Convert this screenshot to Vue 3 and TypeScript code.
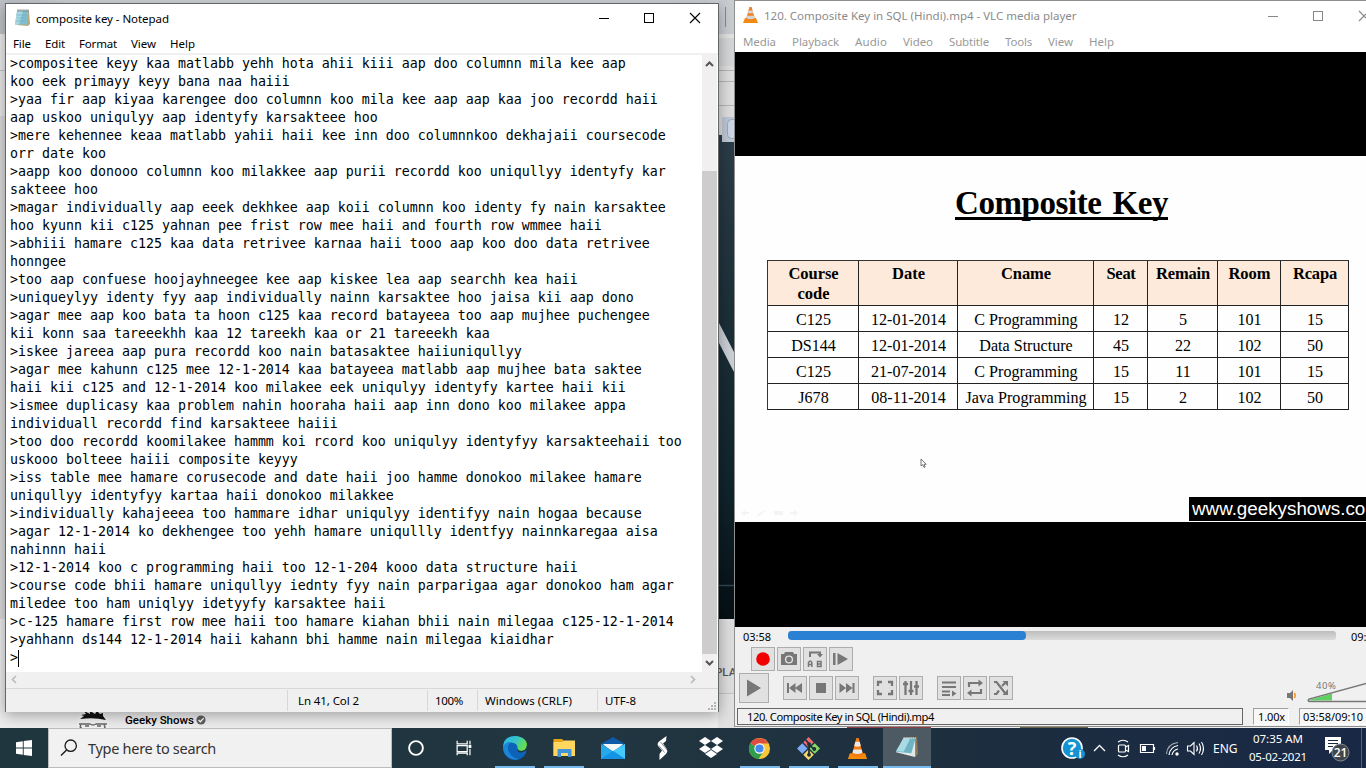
<script setup lang="ts">
import type { Directive } from 'vue'

// Spreads the tracking of a label so that it takes the given width.
const vFit: Directive<HTMLElement, number> = {
  mounted(el, binding) {
    const natural = el.getBoundingClientRect().width
    const count = (el.textContent ?? '').trim().length
    if (count > 0) el.style.letterSpacing = `${(binding.value - natural) / count}px`
  },
}

interface Label { text: string; width: number }

const lines: string[] = [
  '>compositee keyy kaa matlabb yehh hota ahii kiii aap doo columnn mila kee aap',
  'koo eek primayy keyy bana naa haiii',
  '>yaa fir aap kiyaa karengee doo columnn koo mila kee aap aap kaa joo recordd haii',
  'aap uskoo uniqulyy aap identyfy karsakteee hoo',
  '>mere kehennee keaa matlabb yahii haii kee inn doo columnnkoo dekhajaii coursecode',
  'orr date koo',
  '>aapp koo donooo columnn koo milakkee aap purii recordd koo uniqullyy identyfy kar',
  'sakteee hoo',
  '>magar individually aap eeek dekhkee aap koii columnn koo identy fy nain karsaktee',
  'hoo kyunn kii c125 yahnan pee frist row mee haii and fourth row wmmee haii',
  '>abhiii hamare c125 kaa data retrivee karnaa haii tooo aap koo doo data retrivee',
  'honngee',
  '>too aap confuese hoojayhneegee kee aap kiskee lea aap searchh kea haii',
  '>uniqueylyy identy fyy aap individually nainn karsaktee hoo jaisa kii aap dono',
  '>agar mee aap koo bata ta hoon c125 kaa record batayeea too aap mujhee puchengee',
  'kii konn saa tareeekhh kaa 12 tareekh kaa or 21 tareeekh kaa',
  '>iskee jareea aap pura recordd koo nain batasaktee haiiuniqullyy',
  '>agar mee kahunn c125 mee 12-1-2014 kaa batayeea matlabb aap mujhee bata saktee',
  'haii kii c125 and 12-1-2014 koo milakee eek uniqulyy identyfy kartee haii kii',
  '>ismee duplicasy kaa problem nahin hooraha haii aap inn dono koo milakee appa',
  'individuall recordd find karsakteee haiii',
  '>too doo recordd koomilakee hammm koi rcord koo uniqulyy identyfyy karsakteehaii too',
  'uskooo bolteee haiii composite keyyy',
  '>iss table mee hamare corusecode and date haii joo hamme donokoo milakee hamare',
  'uniqullyy identyfyy kartaa haii donokoo milakkee',
  '>individually kahajeeea too hammare idhar uniqulyy identifyy nain hogaa because',
  '>agar 12-1-2014 ko dekhengee too yehh hamare uniqullly identfyy nainnkaregaa aisa',
  'nahinnn haii',
  '>12-1-2014 koo c programming haii too 12-1-204 kooo data structure haii',
  '>course code bhii hamare uniqullyy iednty fyy nain parparigaa agar donokoo ham agar',
  'miledee too ham uniqlyy idetyyfy karsaktee haii',
  '>c-125 hamare first row mee haii too hamare kiahan bhii nain milegaa c125-12-1-2014',
  '>yahhann ds144 12-1-2014 haii kahann bhi hamme nain milegaa kiaidhar',
  '>',
]

const noteMenu: Label[] = [
  { text: 'File', width: 18 },
  { text: 'Edit', width: 20 },
  { text: 'Format', width: 38 },
  { text: 'View', width: 25 },
  { text: 'Help', width: 25 },
]

const vlcMenu: Label[] = [
  { text: 'Media', width: 33 },
  { text: 'Playback', width: 47 },
  { text: 'Audio', width: 32 },
  { text: 'Video', width: 30 },
  { text: 'Subtitle', width: 40 },
  { text: 'Tools', width: 27 },
  { text: 'View', width: 25 },
  { text: 'Help', width: 25 },
]

const heads: Label[][] = [
  [{ text: 'Course', width: 50 }, { text: 'code', width: 32 }],
  [{ text: 'Date', width: 33 }],
  [{ text: 'Cname', width: 50 }],
  [{ text: 'Seat', width: 29 }],
  [{ text: 'Remain', width: 54 }],
  [{ text: 'Room', width: 42 }],
  [{ text: 'Rcapa', width: 44 }],
]

const rows: string[][] = [
  ['C125', '12-01-2014', 'C Programming', '12', '5', '101', '15'],
  ['DS144', '12-01-2014', 'Data Structure', '45', '22', '102', '50'],
  ['C125', '21-07-2014', 'C Programming', '15', '11', '101', '15'],
  ['J678', '08-11-2014', 'Java Programming', '15', '2', '102', '50'],
]
</script>

<template>
  <div class="desktop">
    <div class="browser">
      <div class="tabs"></div>
      <div class="address"></div>
      <div class="bookmarks"></div>
      <div class="hero"></div>
      <div class="below"></div>
    </div>
    <div class="gap-view">
      <svg width="17" height="728" viewBox="0 0 17 728">
        <defs>
          <linearGradient id="heroShade" x1="0" y1="0" x2="0" y2="1">
            <stop offset="0" stop-color="#2b3d49" /><stop offset=".35" stop-color="#1d3039" />
            <stop offset=".75" stop-color="#10232b" /><stop offset="1" stop-color="#050f14" />
          </linearGradient>
        </defs>
        <rect width="17" height="34" fill="#c9cdd2" /><rect y="34" width="17" height="4" fill="#e2e2e2" />
        <rect y="38" width="17" height="28" fill="#d5d6d7" /><rect y="66" width="17" height="70" fill="#dedede" />
        <path d="M0 70.500H17M0 81.500H17M0 105.500H17" stroke="#b5b6b8" />
        <path d="M7.500 7V27" stroke="#858b92" />
        <rect y="135" width="17" height="484" fill="url(#heroShade)" />
        <rect x="4" y="117" width="13" height="25" fill="#c0c8d5" />
        <rect x="9.500" y="119.500" width="12" height="19" rx="4" fill="#cdd7e9" stroke="#9ba8c0" />
        <path d="M0 321L17 354V374L0 341Z" fill="#cbd0d6" />
        <path d="M0 585.500H17" stroke="#334650" stroke-width="1.500" />
        <rect y="619" width="17" height="109" fill="#dedede" />
        <path d="M0 693.500H17" stroke="#c5c5c5" />
        <rect y="694" width="17" height="34" fill="#e2e2e2" />
      </svg>
      <span class="play-label">PLAY</span>
    </div>

    <div class="channel">
      <svg class="avatar" width="32" height="17" viewBox="0 0 32 17">
        <circle cx="16" cy="14" r="16" fill="#f2f2f2" />
        <path d="M3 8L7 5 4 4 9 3 7 0 13 3 13 0 18 3 20 0 23 3 26 2 26 5 29 9Q17 6 3 8Z" fill="#111" />
        <path d="M2 13H13Q16 15 19 13H30M4 14Q2 17 5 17M27 14Q29 17 27 17M8 15H12M20 15H24" fill="none" stroke="#666" stroke-width="1.400" />
      </svg>
      <b v-fit="67">Geeky Shows</b>
      <svg width="10" height="10" viewBox="0 0 10 10"><circle cx="5" cy="5" r="4.600" fill="#606060" /><path d="M2.600 5L4.300 6.700 7.600 3.300" fill="none" stroke="#fff" stroke-width="1.300" /></svg>
    </div>

    <section class="notepad">
      <header class="note-title">
        <svg width="17" height="18" viewBox="0 0 17 18">
          <path d="M3 2L15 2 16 15 14 17 3 16Z" fill="#b9a77c" />
          <path d="M3 2H14.500L13 15.500H1Z" fill="#7fbfd0" /><path d="M3 2H9L5 15.500H1Z" fill="#a9d8e2" />
          <path d="M3.500 1.500H15" stroke="#44545a" stroke-width="2" stroke-dasharray="1 1" />
          <path d="M3 6H13M3 9H12M2 12H12" stroke="#6eacbd" stroke-width=".6" />
        </svg>
        <span v-fit="133" class="caption">composite key - Notepad</span>
        <svg class="winbtns" width="104" height="12" viewBox="0 0 104 12">
          <path d="M1 6.500H11" stroke="#000" /><rect x="46.500" y="1.500" width="9" height="9" fill="none" stroke="#000" />
          <path d="M92 1L102 11M102 1L92 11" stroke="#000" stroke-width="1.100" />
        </svg>
      </header>
      <nav class="note-menu"><span v-for="m in noteMenu" :key="m.text" v-fit="m.width">{{ m.text }}</span></nav>
      <div class="note-body">
        <div class="note-text">
          <div v-for="(line, i) in lines" :key="i" class="note-line">{{ line }}<i v-if="i === lines.length - 1" class="caret"></i></div>
        </div>
        <div class="vscroll">
          <svg width="15" height="18" viewBox="0 0 15 18"><path d="M4 11L7.500 7.500 11 11" fill="none" stroke="#555" stroke-width="2" /></svg>
          <div class="thumb"></div>
          <svg width="15" height="18" viewBox="0 0 15 18"><path d="M4 7L7.500 10.500 11 7" fill="none" stroke="#555" stroke-width="2" /></svg>
        </div>
      </div>
      <div class="hscroll">
        <svg width="8" height="9" viewBox="0 0 8 9"><path d="M6 1L2.500 4.500 6 8" fill="none" stroke="#bbb" stroke-width="1.700" /></svg>
        <svg width="8" height="9" viewBox="0 0 8 9"><path d="M2 1L5.500 4.500 2 8" fill="none" stroke="#bbb" stroke-width="1.700" /></svg>
      </div>
      <footer class="note-status">
        <div></div>
        <div class="pos"><span v-fit="61">Ln 41, Col 2</span></div>
        <div><span v-fit="28">100%</span></div>
        <div><span v-fit="87">Windows (CRLF)</span></div>
        <div><span v-fit="31">UTF-8</span></div>
        <svg class="grip" width="9" height="9" viewBox="0 0 9 9"><path d="M6 0h2v2h-2zM3 3h2v2h-2zM6 3h2v2h-2zM0 6h2v2h-2zM3 6h2v2h-2zM6 6h2v2h-2z" fill="#b5b5b5" /></svg>
      </footer>
    </section>

    <section class="vlc">
      <header class="vlc-title">
        <svg width="15" height="17" viewBox="0 0 15 17">
          <path d="M2 11H13L15 16H0Z" fill="#f58a0d" /><path d="M6.400 0H8.600L12 12Q7.500 15 3 12Z" fill="#f08020" />
          <path d="M5.500 3.500H9.500L10.200 6.200H4.800ZM4 8.700H11L11.600 11.300Q7.500 13 3.400 11.300Z" fill="#d4d4d4" />
        </svg>
        <span v-fit="311">120. Composite Key in SQL (Hindi).mp4 - VLC media player</span>
        <svg class="vlc-winbtns" width="104" height="12" viewBox="0 0 104 12">
          <path d="M1 6.500H11" stroke="#888" /><rect x="46.500" y="1.500" width="9" height="9" fill="none" stroke="#888" />
          <path d="M92 1L102 11M102 1L92 11" stroke="#888" stroke-width="1.200" />
        </svg>
      </header>
      <nav class="vlc-menu"><span v-for="m in vlcMenu" :key="m.text" v-fit="m.width">{{ m.text }}</span></nav>
      <div class="video">
        <div class="slide">
          <h1><span v-fit="213">Composite Key</span></h1>
          <div class="table">
            <div v-for="(h, i) in heads" :key="'h' + i" class="cell head"><span v-for="p in h" :key="p.text" v-fit="p.width">{{ p.text }}</span></div>
            <template v-for="(row, r) in rows" :key="r">
              <div v-for="(c, i) in row" :key="i" class="cell">{{ c }}</div>
            </template>
          </div>
          <svg class="pointer" width="8" height="11" viewBox="0 0 8 11"><path d="M1 1V8L2.800 6.600 4 9.500 5.200 9 4 6.300H6.200Z" fill="#fff" stroke="#555" stroke-width=".8" /></svg>
          <svg class="slide-tools" width="58" height="8" viewBox="0 0 58 8"><path d="M1 4L5 1V3H9V5H5V7ZM17 6L24 1 25 2 19 7ZM34 2H43V6H34ZM50 3H54V1L58 4 54 7V5H50Z" fill="#f3f3f3" /></svg>
          <div class="site">www.geekyshows.com</div>
        </div>
      </div>
      <div class="controls">
        <div class="seek">
          <span v-fit="28">03:58</span>
          <div class="track"><div class="played"></div></div>
          <span class="total" v-fit="28">09:10</span>
        </div>
        <div class="row-a">
          <button class="btn"><svg viewBox="0 0 24 24"><circle cx="12" cy="12" r="6.800" fill="#f20000" /></svg></button>
          <button class="btn"><svg viewBox="0 0 24 24"><path d="M4 7H7L8 5H16L17 7H20V18H4Z" /><circle cx="12" cy="12.500" r="3.400" fill="none" stroke="#e1e1e1" stroke-width="1.400" /></svg></button>
          <button class="btn"><svg viewBox="0 0 24 24"><path d="M7 10V5.500H17V8" fill="none" stroke="#777" stroke-width="2" /><path d="M14 7H20L17 10.500Z" /><path d="M5.500 20V15.500Q7.500 12.500 8.800 15.500V20M5.500 17.500H9M14.500 14.500V19.500H18V14.500ZM14.500 17H18" fill="none" stroke="#777" stroke-width="1.500" /></svg></button>
          <button class="btn"><svg viewBox="0 0 24 24"><path d="M4 6H6.500V18H4ZM8.500 6L19 12 8.500 18Z" /></svg></button>
        </div>
        <div class="row-b">
          <button class="btn big"><svg viewBox="0 0 30 30"><path d="M8 6.500L22 15 8 23.500Z" /></svg></button>
          <div class="group g1">
            <button class="btn"><svg viewBox="0 0 24 24"><path d="M4 7H6V17H4ZM6 12L12.500 7V17ZM12 12L19 7V17Z" /></svg></button>
            <button class="btn"><svg viewBox="0 0 24 24"><path d="M7 7H17V17H7Z" /></svg></button>
            <button class="btn"><svg viewBox="0 0 24 24"><path d="M17.500 7H19.500V17H17.500ZM4.500 7L11 12 4.500 17ZM11 7L17.500 12 11 17Z" /></svg></button>
          </div>
          <div class="group g2">
            <button class="btn"><svg viewBox="0 0 24 24"><path d="M9 6H5V10M15 6H19V10M5 14V18H9M19 14V18H15" fill="none" stroke="#777" stroke-width="2.300" /></svg></button>
            <button class="btn"><svg viewBox="0 0 24 24"><path d="M6.500 5V19M12 5V19M17.500 5V19M4 8H9M9.500 15H14.500M15 10.500H20" fill="none" stroke="#777" stroke-width="2.300" /></svg></button>
          </div>
          <div class="group g3">
            <button class="btn"><svg viewBox="0 0 24 24"><path d="M5 6.500H19M5 11H19M5 15.500H13" fill="none" stroke="#777" stroke-width="2" /><path d="M5 18H13V20H5ZM15 14.500L19.500 17.500 15 20.500Z" /></svg></button>
            <button class="btn"><svg viewBox="0 0 24 24"><path d="M6 11V7H16M18 13V17H8" fill="none" stroke="#777" stroke-width="2.200" /><path d="M15.500 3.500L20 7 15.500 10.500ZM8.500 13.500L4 17 8.500 20.500Z" /></svg></button>
            <button class="btn"><svg viewBox="0 0 24 24"><path d="M5 6H7.500L16 17M5 18H7.500L10 14.500M13 10L16 7" fill="none" stroke="#777" stroke-width="2.200" /><path d="M13.500 5H19V10.500ZM13.500 19H19V13Z" /></svg></button>
          </div>
          <svg class="volume" width="80" height="30" viewBox="0 0 80 30">
            <path d="M0 16H3L6 13V24L3 21H0Z" fill="#777" /><path d="M7.300 16Q9 18.500 7.300 21" stroke="#f7931e" stroke-width="1.600" fill="none" />
            <path d="M22 23L45 16.500V23.500H22Z" fill="#60d060" /><path d="M80 6.200L22 22Q20 24.500 23 24.500H80" fill="none" stroke="#777" stroke-width="1.400" />
            <text x="29" y="12" textLength="20">40%</text>
          </svg>
        </div>
        <div class="vlc-status">
          <div class="now"><span v-fit="187">120. Composite Key in SQL (Hindi).mp4</span></div>
          <div class="rate"><span v-fit="27">1.00x</span></div>
          <div class="clock"><span v-fit="60">03:58/09:10</span></div>
        </div>
      </div>
    </section>
    <div class="peek"><i class="red"></i><i class="olive"></i></div>

    <footer class="taskbar">
      <div class="start"><svg width="16" height="16" viewBox="0 0 16 16"><path d="M0 2.300L6.800 1.300V7.600H0ZM7.700 1.100L16 0V7.600H7.700ZM0 8.400H6.800V14.700L0 13.700ZM7.700 8.400H16V16L7.700 14.900Z" fill="#fff" /></svg></div>
      <div class="search">
        <svg width="18" height="18" viewBox="0 0 18 18"><circle cx="10.700" cy="6.700" r="5.700" fill="none" stroke="#1a1a1a" stroke-width="1.300" /><path d="M6.600 10.900L1 16.500" stroke="#1a1a1a" stroke-width="1.400" /></svg>
        <span v-fit="128">Type here to search</span>
      </div>
      <div class="apps">
        <div class="app w48"><svg viewBox="0 0 24 24"><circle cx="12" cy="12" r="6.900" fill="none" stroke="#fff" stroke-width="1.900" /></svg></div>
        <div class="app w48"><svg viewBox="0 0 24 24"><path d="M4.500 4V7.500H15.500V4M4.500 20V17.500H15.500V20M4.500 9.500H15.500V16H4.500ZM18.500 4V8M18.500 13V20" fill="none" stroke="#fff" stroke-width="1.300" /><path d="M17 8.500H20V12H17Z" fill="#fff" /></svg></div>
        <div class="app run"><svg viewBox="0 0 24 24">
          <defs><linearGradient id="edgeTop" x1="0" y1="0" x2="1" y2=".4"><stop offset="0" stop-color="#2bb4ea" /><stop offset=".55" stop-color="#35c4c9" /><stop offset="1" stop-color="#65df4b" /></linearGradient></defs>
          <circle cx="12" cy="12" r="12" fill="#0c63b8" />
          <path d="M0 12Q0 0 12 0 24 1 24 9.500 23 15 17 15 13.500 15 14.500 12.500 15 7 8 6.500 2 7 0 12Z" fill="url(#edgeTop)" />
          <path d="M0 11Q2 6 8 6 3 11 6 16 9 22 16 23 10 25 5 21 0 17 0 11Z" fill="#1b86d8" />
          <path d="M14.800 12Q13 15 16.500 16.500 20 17 23.500 14V17L26 17 24 8Q24 14 19 15 14.500 15 14.800 12Z" fill="#213640" />
        </svg></div>
        <div class="app run"><svg viewBox="0 0 24 24"><path d="M1.500 3H10L12 5H22V20H1.500Z" fill="#e8a317" /><path d="M1.500 6H10L12 4.500H23V20H1.500Z" fill="#ffd75e" /><path d="M5.500 21V14Q5.500 13 6.500 13H18.500Q19.500 13 19.500 14V21H16V17H9V21Z" fill="#3e95dc" /></svg></div>
        <div class="app"><svg viewBox="0 0 24 24"><path d="M0 8L12 1 24 8V12H0Z" fill="#0d5ba9" /><path d="M2 8H22L12 16Z" fill="#f4f6f8" /><path d="M0 8L12 15 24 8V23H0Z" fill="#25a9ea" /><path d="M2 8.500H22L12 15Z" fill="#f4f6f8" /><path d="M12 15L24 8V23Z" fill="#43c9fb" /><path d="M0 23L12 15 24 23Z" fill="#1492e6" /></svg></div>
        <div class="app"><svg viewBox="0 0 24 24"><path d="M16.500 0L9 5.500Q6.500 8 8.500 10.500L12 14.500 9.500 18V24L15.500 18.500Q18.500 15.500 16.500 12.500L13 7.500 16 5Z" fill="#fff" /><path d="M10.500 6L17 14M9 9.500L14.500 16.500" stroke="#213640" stroke-width=".5" /></svg></div>
        <div class="app"><svg viewBox="0 0 24 24"><path d="M6 1L12 5 6 9 0 5ZM18 1L24 5 18 9 12 5ZM6 9L12 13 6 17 0 13ZM18 9L24 13 18 17 12 13ZM6 18L12 14 18 18 12 22Z" fill="#fff" /></svg></div>
        <div class="app run"><svg viewBox="0 0 24 24"><circle cx="12" cy="12" r="11" fill="#f9c83a" /><path d="M12 12L2.500 6.500A11 11 0 0 0 11 23L16.500 14.500Z" fill="#2d9e50" /><path d="M12 12L2.500 6.500A11 11 0 0 1 21.500 6.800H12Z" fill="#df4d40" /><circle cx="12" cy="12" r="5.400" fill="#fff" /><circle cx="12" cy="12" r="4.300" fill="#4588ef" /></svg></div>
        <div class="app run"><svg viewBox="0 0 24 24"><path d="M12 0L17.500 5.500 12 11 6.500 5.500Z" fill="#ef6b70" /><path d="M18.500 6.500L24 12 18.500 17.500 13 12Z" fill="#85d866" /><path d="M5.500 6.500L11 12 5.500 17.500 0 12Z" fill="#7fabf5" /><path d="M12 13L17.500 18.500 12 24 6.500 18.500Z" fill="#f7da6e" /><path d="M9 3L12.500 7V19M12.500 8L18 13" stroke="#20303a" stroke-width="1.800" fill="none" /><path d="M12.500 5.500a2 2 0 1 0 .1 0M12.500 16.500a2 2 0 1 0 .1 0M18 10.500a2 2 0 1 0 .1 0" fill="#20303a" /></svg></div>
        <div class="app run"><svg viewBox="0 0 24 24"><path d="M4 17H20L22 23H2Z" fill="#f58a0d" /><path d="M10.800 1H13.200L18 19Q12 22 6 19Z" fill="#f57c10" /><path d="M9.700 5H14.300L15.400 9.500Q12 11 8.600 9.500ZM7.700 13H16.300L17.200 16.500Q12 19 6.800 16.500Z" fill="#e9e9e9" /></svg></div>
        <div class="app active"><svg viewBox="0 0 24 24"><path d="M8 2L22 1 23 19 20 22 8 19Z" fill="#8d7752" /><path d="M8 2H20L20 22 0 17Z" fill="#dfe9ea" /><path d="M8 2H20.500L16 18 0 16.500Z" fill="#6fb4c4" /><path d="M8 2H15L8 16.500 0 16Z" fill="#a9dbe4" /><path d="M8 2H20.500" stroke="#d6d6d6" stroke-width="2" stroke-dasharray="1 1" /></svg></div>
      </div>
      <div class="tray">
        <svg width="180" height="40" viewBox="0 0 180 40">
          <circle cx="15" cy="20" r="10" fill="#1393d2" stroke="#fff" stroke-width="1.600" />
          <text x="15" y="26.500" class="q">?</text>
          <circle cx="23" cy="26" r="5" fill="#1393d2" /><text x="23" y="30" class="i">i</text>
          <path d="M37 23L42.500 17.500 48 23" fill="none" stroke="#fff" stroke-width="1.300" />
          <g fill="none" stroke="#fff" stroke-width="1.200"><rect x="61.500" y="17" width="7" height="7" rx="1" /><path d="M68.500 19L71.500 17.500V23.500L68.500 22M61 14Q66 10.500 71 14M61 27Q66 30.500 71 27" /></g>
          <path d="M83.500 16.500H96.500V24.500H83.500ZM97.500 19V22" fill="none" stroke="#fff" stroke-width="1.200" /><path d="M85 18H89V23H85Z" fill="#fff" />
          <g fill="none" stroke="#fff" stroke-width="1.200"><path d="M109.500 26Q110 16 121 14.500" opacity=".6" /><path d="M112 27Q113 19 121 17.500M115 27Q116 22 121 21" /></g><circle cx="120" cy="26" r="1.700" fill="#fff" />
          <path d="M130.500 18H133.500L137 14.500V26.500L133.500 23H130.500ZM139.500 17.500Q141.500 20.500 139.500 23.500M142 15.500Q145 20.500 142 25.500M144.500 14Q148.500 20.500 144.500 27" fill="none" stroke="#fff" stroke-width="1.100" />
        </svg>
        <span class="lang" v-fit="23">ENG</span>
        <div class="when"><span v-fit="50">07:35 AM</span><span v-fit="58">05-02-2021</span></div>
        <svg class="notice" width="28" height="28" viewBox="0 0 28 28"><path d="M1 3H17V16H9L5 20V16H1Z" fill="#fff" /><path d="M4 6.500H14M4 9.500H14M4 12.500H9" stroke="#1b2b3e" /><circle cx="16.500" cy="18.500" r="8.500" fill="#40464b" stroke="#858b90" /><text x="16.500" y="23">21</text></svg>
        <i class="peek-line"></i>
      </div>
    </footer>
  </div>
</template>

<style>
body { margin: 0; overflow: hidden; }
</style>

<style scoped>
.desktop { position: relative; width: 1366px; height: 768px; overflow: hidden; background: #eee; font-family: "Noto Sans", "Open Sans", sans-serif; font-size: 11.500px; color: #000; }
.desktop * { box-sizing: border-box; }
.desktop span, .desktop b { display: inline-block; white-space: nowrap; }
svg { display: block; flex: none; }
.browser { display: flex; flex-direction: column; height: 728px; }
.tabs { height: 34px; background: linear-gradient(90deg, #bfc3c9, #d3d6da 5%, #d0d4d9); }
.address { height: 37px; background: #ececec; border-bottom: 1px solid #c5c5c5; }
.bookmarks { height: 45px; background: #e9e9e9; }
.hero { height: 503px; background: #dcdcdc; }
.below { flex: 1; background: #ededed; }
.gap-view { position: absolute; left: 718px; top: 0; }
.play-label { position: absolute; left: -3px; top: 664px; font: 500 11.500px/16px Roboto, sans-serif; color: #555; }
.channel { position: absolute; left: 77px; top: 711px; display: flex; height: 17px; align-items: center; }
.channel b { margin: 1px 4px 0 16px; font: 500 11.500px/14px Roboto, sans-serif; width: 67px; }

.notepad { position: absolute; left: 5px; top: 3px; width: 714px; height: 709px; border: 1px solid #62676a; background: #fff; box-shadow: 0 3px 14px rgba(0, 0, 0, .34); display: flex; flex-direction: column; }
.note-title { height: 31px; flex: none; display: flex; align-items: center; padding: 0 16px 3px 8px; }
.caption { margin-left: 5px; }
.winbtns { margin-left: auto; }
.note-menu { height: 18px; flex: none; display: flex; gap: 14px; padding-left: 7px; line-height: 17px; }
.note-body { height: 619px; flex: none; display: flex; border-top: 2px solid #f0f0f0; }
.note-text { width: 696px; padding: 0 0 0 4px; font: 13.290px/18px "DejaVu Sans Mono", monospace; }
.note-line { height: 18px; white-space: pre; display: flex; align-items: center; }
.caret { width: 1px; height: 17px; background: #000; }
.vscroll { width: 15px; background: #f0f0f0; display: flex; flex-direction: column; }
.thumb { height: 483px; margin-top: 98px; background: #cdcdcd; }
.hscroll { height: 16px; flex: none; background: #f0f0f0; display: flex; justify-content: space-between; align-items: center; padding: 0 21px 2px 4px; }
.note-status { flex: 1; background: #f0f0f0; border-top: 1px solid #d7d7d7; display: grid; grid-template-columns: 282px 140px 50px 120px 1fr; position: relative; }
.note-status > div { margin: 1px 0; border-right: 1px solid #d7d7d7; line-height: 21px; padding-left: 7px; }
.note-status > .pos { padding-left: 10px; }
.note-status > div:nth-of-type(5) { border: 0; }
.grip { position: absolute; right: 1px; bottom: 1px; }

.vlc { position: absolute; left: 734px; top: 0; width: 660px; height: 727px; border: 1px solid #8e8e8e; border-width: 1px 0 1px 1px; background: #fff; display: flex; flex-direction: column; }
.vlc-title { height: 31px; flex: none; display: flex; align-items: center; padding: 0 0 2px 8px; color: #8b8b8b; }
.vlc-title > span { margin-left: 6px; width: 311px; }
.vlc-winbtns { margin-left: 192px; }
.vlc-menu { height: 20px; flex: none; display: flex; gap: 16px; padding-left: 8px; line-height: 20px; color: #999; }
.video { height: 575px; flex: none; background: #000; padding: 104px 0 105px; }
.slide { height: 366px; width: 631px; background: #fefefe; padding: 27px 0 0 32px; position: relative; font-family: "Liberation Serif", serif; overflow: hidden; }
h1 { margin: 0 0 0 188px; width: 213px; height: 37px; border-bottom: 3px solid #000; font-size: 33px; line-height: 40px; font-weight: bold; word-spacing: 3px; }
.table { margin-top: 40px; width: 582px; display: grid; grid-template-columns: 91px 99px 136px 54px 70px 63px 68px; grid-template-rows: 45px 26px 26px 26px 26px; border: solid #333; border-width: 1px 0 0 1px; }
.cell { border: solid #222; border-width: 0 1px 1px 0; font-size: 16.100px; line-height: 27px; padding-left: 1px; text-align: center; white-space: nowrap; }
.head { display: flex; flex-direction: column; align-items: center; background: #fdeada; font-weight: bold; line-height: 20px; padding-top: 3px; font-size: 16.500px; }
.pointer { position: absolute; left: 185px; top: 302px; }
.slide-tools { position: absolute; left: 5px; top: 353px; }
.site { position: absolute; left: 454px; top: 341px; width: 190px; height: 24px; background: #000; color: #fff; padding-left: 3px; font: 18.800px/23px "Liberation Sans", sans-serif; white-space: nowrap; }
.controls { height: 99px; flex: none; width: 631px; background: #f0f0f0; padding-left: 2px; overflow: hidden; }
.seek { height: 20px; display: flex; align-items: center; padding-left: 6px; font-size: 11px; }
.seek > span { width: 28px; flex: none; margin-top: -1px; }
.track { height: 9px; width: 548px; flex: none; margin: -3px 15px 0 17px; background: linear-gradient(#bdbdbd, #dcdcdc); border-radius: 3px; }
.played { width: 238px; height: 9px; background: #2a80d2; border-radius: 4px; }
.row-a { height: 24px; display: flex; gap: 2px; padding-left: 14px; }
.btn { width: 24px; height: 24px; padding: 0; border: 1px solid #adadad; background: #e1e1e1; flex: none; display: grid; place-items: center; }
.btn svg { width: 24px; height: 24px; fill: #777; margin: -1px; }
.row-b { height: 30px; margin-top: 2px; display: flex; align-items: center; padding-left: 2px; }
.big { width: 30px; height: 30px; }
.big svg { width: 30px; height: 30px; }
.group { display: flex; gap: 2px; }
.g1, .g2, .g3 { margin-left: 14px; }
.volume { margin-left: 274px; margin-top: 8px; }
.volume text { font-size: 9.500px; fill: #777; }
.vlc-status { height: 17px; margin-top: 5px; display: flex; }
.vlc-status > div { flex: none; }
.now { width: 506px; border: 1px solid #666; padding-left: 9px; line-height: 16px; font-size: 11.200px; }
.rate { margin-left: 10px; width: 36px; background: #f7f7f7; border: 1px solid; border-color: #a0a0a0 #fff #fff #a0a0a0; padding-left: 4px; line-height: 16px; font-size: 11px; }
.clock { margin-left: 10px; width: 70px; background: #f7f7f7; border: 1px solid; border-color: #a0a0a0 #fff #fff #a0a0a0; padding-left: 3px; line-height: 16px; font-size: 11px; }
.peek { position: absolute; left: 847px; top: 727px; display: flex; height: 1px; gap: 89px; }
.red { width: 84px; background: #923c44; }
.olive { width: 68px; background: #6a6347; }

.taskbar { position: absolute; left: 0; top: 728px; width: 1366px; height: 40px; display: flex; background: linear-gradient(90deg, #20363f, #213640 45%, #1d2e3f 70%, #192845); }
.start { width: 48px; display: grid; place-items: center; }
.search { width: 344px; background: #f1f1f1; border: 1px solid #bcbcbc; display: flex; align-items: center; padding-left: 11px; color: #333; font-size: 14.500px; }
.search span { margin-left: 10px; }
.apps { display: flex; }
.app { width: 49px; height: 40px; display: flex; align-items: center; justify-content: center; position: relative; }
.w48 { width: 48px; }
.w48 + .run { margin-left: 2px; }
.app svg { width: 24px; height: 24px; }
.app:nth-child(2) svg { width: 22px; height: 22px; }
.app:nth-child(n+8) svg { width: 23px; height: 23px; }
.run::after { content: ""; position: absolute; left: 5px; bottom: 0; width: 40px; height: 2px; background: #76b9ed; }
.active { width: 48px; background: #4d5a64; border-bottom: 2px solid #76b9ed; margin-left: 1px; }
.tray { margin-left: auto; width: 309px; display: flex; align-items: center; color: #fff; font-size: 12px; }
.tray > svg:first-child { width: 180px; margin-right: -24px; }
.q { font: bold 18px "Open Sans", sans-serif; fill: #fff; text-anchor: middle; }
.i { font: bold 10px "Open Sans", sans-serif; fill: #fff; text-anchor: middle; }
.lang { width: 23px; flex: none; }
.when { margin-left: 13px; width: 58px; display: flex; flex-direction: column; align-items: center; line-height: 18px; font-size: 11.500px; flex: none; }
.notice { margin-left: 17px; }
.notice text { font: 600 12px "Open Sans", sans-serif; fill: #fff; text-anchor: middle; }
.peek-line { width: 1px; height: 40px; background: #56616e; margin-left: auto; margin-right: 4px; }
</style>
